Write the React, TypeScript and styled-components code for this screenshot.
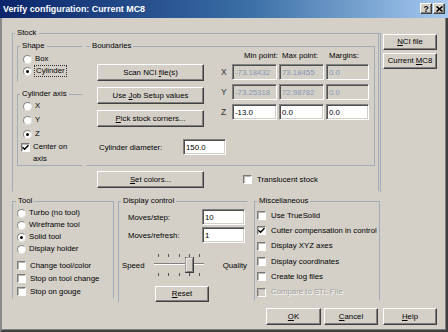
import React from "react";
import styled, { createGlobalStyle } from "styled-components";

const face = "#d4d0c8";
const line = "#a2abb8";
const textSize = "7.8px";

const GlobalStyle = createGlobalStyle`
  html, body {
    margin: 0;
    padding: 0;
    background: ${face};
  }
  body {
    font-family: "Liberation Sans", Arial, sans-serif;
    font-size: ${textSize};
    color: #000;
  }
`;

export default function App() {
  return (
    <>
      <GlobalStyle />
      <Window>
        <TitleBar>
          <TitleText>Verify configuration: Current MC8</TitleText>
          <CaptionButton>?</CaptionButton>
          <CaptionButton>
            <svg width="7" height="6" viewBox="0 0 7 6">
              <path d="M0.5 0.5 L6.5 5.5 M6.5 0.5 L0.5 5.5" stroke="#000" strokeWidth="1.6" />
            </svg>
          </CaptionButton>
        </TitleBar>
        <Body>
          <TopRow>
            <Group $w={369} $double $noBottom>
              <Legend>Stock</Legend>
              <StockBody>
                <StockRow>
                  <ShapeColumn>
                    <Group $w={66} $noRight $noBottom>
                      <Legend>Shape</Legend>
                      <ShapeBody>
                        <Option $h={12}>
                          <Radio />
                          Box
                        </Option>
                        <Option $h={12}>
                          <Radio $on />
                          <Focus>Cylinder</Focus>
                        </Option>
                      </ShapeBody>
                    </Group>
                    <AxisGroup $w={66} $noRight>
                      <Legend>Cylinder axis</Legend>
                      <AxisBody>
                        <Option $h={14}>
                          <Radio />X
                        </Option>
                        <Option $h={14}>
                          <Radio />Y
                        </Option>
                        <Option $h={14}>
                          <Radio $on />Z
                        </Option>
                        <WrapOption>
                          <Check $on />
                          <WrapText>Center on axis</WrapText>
                        </WrapOption>
                      </AxisBody>
                    </AxisGroup>
                  </ShapeColumn>
                  <Group $w={289} $noLeft>
                    <Legend $indent={3}>Boundaries</Legend>
                    <BoundsBody>
                      <BoundsTop>
                        <ButtonStack>
                          <PushButton $w={107}>
                            Scan NCI <u>f</u>ile(s)
                          </PushButton>
                          <PushButton $w={107}>
                            Use <u>J</u>ob Setup values
                          </PushButton>
                          <PushButton $w={107}>
                            <u>P</u>ick stock corners...
                          </PushButton>
                        </ButtonStack>
                        <CoordGrid>
                          <span />
                          <ColHead $pad={12}>Min point:</ColHead>
                          <ColHead $pad={3}>Max point:</ColHead>
                          <ColHead $pad={3}>Margins:</ColHead>
                          <AxisLabel>X</AxisLabel>
                          <Field $w={45} $off readOnly value="-73.18432" />
                          <Field $w={45} $off readOnly value="73.18455" />
                          <Field $w={43} $off readOnly value="0.0" />
                          <AxisLabel>Y</AxisLabel>
                          <Field $w={45} $off readOnly value="-73.25318" />
                          <Field $w={45} $off readOnly value="72.98782" />
                          <Field $w={43} $off readOnly value="0.0" />
                          <AxisLabel>Z</AxisLabel>
                          <Field $w={45} readOnly value="-13.0" />
                          <Field $w={45} readOnly value="0.0" />
                          <Field $w={43} readOnly value="0.0" />
                        </CoordGrid>
                      </BoundsTop>
                      <DiameterRow>
                        <DiameterLabel>Cylinder diameter:</DiameterLabel>
                        <Field $w={43} readOnly value="150.0" />
                      </DiameterRow>
                    </BoundsBody>
                  </Group>
                </StockRow>
                <StockFooter>
                  <PushButton $w={107}>
                    <u>S</u>et colors...
                  </PushButton>
                  <TranslucentOption $h={17} $gap={5}>
                    <Check />
                    Translucent stock
                  </TranslucentOption>
                </StockFooter>
              </StockBody>
            </Group>
            <SideButtons>
              <PushButton $w={54} $h={16}>
                <u>N</u>CI file
              </PushButton>
              <PushButton $w={54} $h={16}>
                Current <u>M</u>C8
              </PushButton>
            </SideButtons>
          </TopRow>

          <BottomRow>
            <Group $w={102} $noBottom>
              <Legend $indent={3}>Tool</Legend>
              <ToolBody>
                <Option $h={12}>
                  <Radio />
                  Turbo (no tool)
                </Option>
                <Option $h={12}>
                  <Radio />
                  Wireframe tool
                </Option>
                <Option $h={12}>
                  <Radio $on />
                  Solid tool
                </Option>
                <Option $h={12}>
                  <Radio />
                  Display holder
                </Option>
                <ToolChecks>
                  <Option $h={13} $gap={4}>
                    <Check />
                    Change tool/color
                  </Option>
                  <Option $h={13} $gap={4}>
                    <Check />
                    Stop on tool change
                  </Option>
                  <Option $h={13} $gap={4}>
                    <Check />
                    Stop on gouge
                  </Option>
                </ToolChecks>
              </ToolBody>
            </Group>

            <DisplayGroup $w={130} $noRight $noBottom>
              <Legend>Display control</Legend>
              <DisplayBody>
                <MoveRow>
                  <MoveLabel>Moves/step:</MoveLabel>
                  <Field $w={43} readOnly value="10" />
                </MoveRow>
                <MoveRow>
                  <MoveLabel>Moves/refresh:</MoveLabel>
                  <Field $w={43} readOnly value="1" />
                </MoveRow>
                <SpeedRow>
                  <SpeedLabel>Speed</SpeedLabel>
                  <SpeedSlider />
                  <QualityLabel>Quality</QualityLabel>
                </SpeedRow>
                <ResetButton $w={54} $h={16}>
                  <u>R</u>eset
                </ResetButton>
              </DisplayBody>
            </DisplayGroup>

            <MiscGroup $w={126} $noBottom>
              <Legend>Miscellaneous</Legend>
              <MiscBody>
                <Option $h={15.3} $gap={5}>
                  <Check />
                  Use TrueSolid
                </Option>
                <Option $h={15.3} $gap={5}>
                  <Check $on />
                  Cutter compensation in control
                </Option>
                <Option $h={15.3} $gap={5}>
                  <Check />
                  Display XYZ axes
                </Option>
                <Option $h={15.3} $gap={5}>
                  <Check />
                  Display coordinates
                </Option>
                <Option $h={15.3} $gap={5}>
                  <Check />
                  Create log files
                </Option>
                <Option $h={15.3} $gap={5} $off>
                  <Check $off />
                  Compare to STL File
                </Option>
              </MiscBody>
            </MiscGroup>
          </BottomRow>

          <Footer>
            <PushButton $w={55}>
              <u>O</u>K
            </PushButton>
            <PushButton $w={54}>
              <u>C</u>ancel
            </PushButton>
            <HelpButton $w={54}>
              <u>H</u>elp
            </HelpButton>
          </Footer>
        </Body>
      </Window>
    </>
  );
}

function Radio({ $on }: { $on?: boolean }) {
  return <RadioDot $on={$on} />;
}

function Check({ $on, $off }: { $on?: boolean; $off?: boolean }) {
  return (
    <CheckBox $off={$off}>
      {$on && (
        <svg width="7" height="7" viewBox="0 0 7 7">
          <path d="M0.5 3.2 L2.6 5.3 L6.5 1.2" fill="none" stroke="#000" strokeWidth="1.5" />
        </svg>
      )}
    </CheckBox>
  );
}

function SpeedSlider() {
  const ticks = [7.5, 17.5, 28.5, 38.5, 48.5];
  return (
    <SliderBox width="56" height="24" viewBox="0 0 56 24">
      {ticks.map((x) => (
        <g key={x}>
          <line x1={x} y1="1" x2={x} y2="4" stroke="#555" strokeWidth="1" />
          <line x1={x} y1="20" x2={x} y2="23" stroke="#555" strokeWidth="1" />
        </g>
      ))}
      <line x1="3" y1="10.5" x2="53" y2="10.5" stroke="#808080" strokeWidth="1" />
      <line x1="3" y1="11.5" x2="53" y2="11.5" stroke="#ffffff" strokeWidth="1" />
      <rect x="34.5" y="4.5" width="8" height="15" fill={face} stroke="#404040" strokeWidth="1" />
      <path d="M35 19 V5 H42" fill="none" stroke="#ffffff" strokeWidth="1" />
      <path d="M35.5 18.5 H41.5 V5.5" fill="none" stroke="#808080" strokeWidth="1" />
    </SliderBox>
  );
}

const Window = styled.div`
  box-sizing: border-box;
  width: 448px;
  height: 332px;
  display: flex;
  flex-direction: column;
  background: ${face};
  overflow: hidden;
`;

const TitleBar = styled.div`
  flex: none;
  height: 18px;
  display: flex;
  align-items: center;
  padding: 0 3px 1px 3px;
  box-sizing: border-box;
  background: linear-gradient(to right, #0a246a 0%, #3a6ea5 55%, #a6caf0 100%);
  color: #fff;
`;

const TitleText = styled.div`
  flex: 1;
  font-weight: bold;
  font-size: 8.9px;
  white-space: nowrap;
`;

const CaptionButton = styled.div`
  box-sizing: border-box;
  width: 12px;
  height: 11px;
  margin-left: 1px;
  display: flex;
  align-items: center;
  justify-content: center;
  background: ${face};
  color: #000;
  font-weight: bold;
  font-size: 8.5px;
  border: 1px solid;
  border-color: #fff #404040 #404040 #fff;
  box-shadow: inset -1px -1px #808080;
`;

const Body = styled.div`
  flex: 1;
  display: flex;
  flex-direction: column;
  padding: 10px 9px 0 10px;
  border-left: 2px solid #8a8a8a;
  border-right: 2px solid #404040;
  border-bottom: 2px solid #404040;
  box-shadow: inset 0 -1px #808080, inset -1px 0 #808080;
`;

const TopRow = styled.div`
  display: flex;
  align-items: flex-start;
`;

const BottomRow = styled.div`
  display: flex;
  align-items: flex-start;
  margin-top: 4px;
`;

const Group = styled.fieldset<{
  $w: number;
  $noLeft?: boolean;
  $noRight?: boolean;
  $noBottom?: boolean;
  $double?: boolean;
}>`
  box-sizing: border-box;
  flex: none;
  width: ${(p) => p.$w}px;
  min-width: 0;
  margin: 0;
  padding: 0;
  border: 1px solid ${line};
  ${(p) => p.$noLeft && "border-left-color: transparent;"}
  ${(p) => p.$noRight && "border-right-color: transparent;"}
  ${(p) => p.$noBottom && "border-bottom-color: transparent;"}
  ${(p) => p.$double && `border-right: 3px double ${line};`}
`;

const AxisGroup = styled(Group)`
  margin-top: 7px;
`;

const DisplayGroup = styled(Group)`
  margin-left: 4px;
`;

const MiscGroup = styled(Group)`
  margin-left: 6px;
`;

const Legend = styled.legend<{ $indent?: number }>`
  margin-left: ${(p) => p.$indent ?? 2}px;
  padding: 0 2px;
  font-size: ${textSize};
  line-height: 10px;
`;

const StockBody = styled.div`
  display: flex;
  flex-direction: column;
  padding: 3px 0 3px 4px;
`;

const StockRow = styled.div`
  display: flex;
  align-items: flex-start;
  gap: 3px;
`;

const ShapeColumn = styled.div`
  display: flex;
  flex-direction: column;
  width: 66px;
`;

const ShapeBody = styled.div`
  display: flex;
  flex-direction: column;
  padding: 2px 0 4px 5px;
`;

const AxisBody = styled.div`
  display: flex;
  flex-direction: column;
  padding: 0 0 0 5px;
`;

const Option = styled.label<{ $h: number; $gap?: number; $off?: boolean }>`
  display: flex;
  align-items: center;
  height: ${(p) => p.$h}px;
  gap: ${(p) => p.$gap ?? 3}px;
  white-space: nowrap;
  line-height: 10px;
  color: ${(p) => (p.$off ? "#a09e98" : "#000")};
  text-shadow: ${(p) => (p.$off ? "1px 1px #fff" : "none")};
`;

const TranslucentOption = styled(Option)`
  margin-left: 39px;
`;

const WrapOption = styled.label`
  display: flex;
  align-items: flex-start;
  gap: 3px;
  margin-left: -2px;
  line-height: 12px;
  & > span:first-child {
    margin-top: 2px;
  }
`;

const WrapText = styled.span`
  width: 40px;
`;

const Focus = styled.span`
  outline: 1px dotted #333;
  outline-offset: 0;
  padding: 0 1px;
`;

const RadioDot = styled.span<{ $on?: boolean }>`
  box-sizing: border-box;
  flex: none;
  width: 9px;
  height: 9px;
  border-radius: 50%;
  background: #fff;
  border: 1px solid;
  border-color: #8a8a8a #e4e2dc #e4e2dc #8a8a8a;
  display: flex;
  align-items: center;
  justify-content: center;
  &::after {
    content: "";
    width: 3px;
    height: 3px;
    border-radius: 50%;
    background: ${(p) => (p.$on ? "#000" : "transparent")};
  }
`;

const CheckBox = styled.span<{ $off?: boolean }>`
  box-sizing: border-box;
  flex: none;
  width: 9px;
  height: 9px;
  display: flex;
  align-items: center;
  justify-content: center;
  background: ${(p) => (p.$off ? face : "#fff")};
  border: 1px solid;
  border-color: #7a7a7a #fff #fff #7a7a7a;
  box-shadow: inset 1px 1px #b8b6b0;
`;

const BoundsBody = styled.div`
  display: flex;
  flex-direction: column;
  padding: 1px 0 10px 10px;
`;

const BoundsTop = styled.div`
  display: flex;
  align-items: flex-start;
`;

const ButtonStack = styled.div`
  display: flex;
  flex-direction: column;
  gap: 6px;
  margin-top: 12px;
`;

const PushButton = styled.button<{ $w: number; $h?: number }>`
  box-sizing: border-box;
  flex: none;
  width: ${(p) => p.$w}px;
  height: ${(p) => p.$h ?? 17}px;
  margin: 0;
  padding: 0;
  font-family: inherit;
  font-size: ${textSize};
  line-height: 10px;
  color: #000;
  background: ${face};
  border: 1px solid;
  border-color: #fff #404040 #404040 #fff;
  box-shadow: inset -1px -1px #808080;
  white-space: nowrap;
`;

const ResetButton = styled(PushButton)`
  margin: 9px 0 0 36px;
`;

const HelpButton = styled(PushButton)`
  margin-left: 2px;
`;

const CoordGrid = styled.div`
  display: grid;
  grid-template-columns: 10px 45px 45px 43px;
  grid-template-rows: 8px 16px 16px 16px;
  column-gap: 2px;
  row-gap: 4px;
  align-items: center;
  margin-left: 16px;
`;

const ColHead = styled.span<{ $pad: number }>`
  padding-left: ${(p) => p.$pad}px;
  white-space: nowrap;
  line-height: 8px;
`;

const AxisLabel = styled.span`
  color: #333;
  font-size: 8.5px;
  padding-left: 1px;
`;

const Field = styled.input<{ $w: number; $off?: boolean }>`
  box-sizing: border-box;
  width: ${(p) => p.$w}px;
  height: 16px;
  margin: 0;
  padding: 0 0 0 2px;
  font-family: inherit;
  font-size: ${textSize};
  color: ${(p) => (p.$off ? "#8898b4" : "#000")};
  background: ${(p) => (p.$off ? face : "#fff")};
  border: 1px solid;
  border-color: #808080 #fff #fff #808080;
  box-shadow: inset 1px 1px #505050, inset -1px -1px ${face};
  outline: none;
`;

const DiameterRow = styled.div`
  display: flex;
  align-items: center;
  margin-top: 12px;
`;

const DiameterLabel = styled.span`
  box-sizing: border-box;
  width: 86px;
  padding-left: 2px;
`;

const StockFooter = styled.div`
  display: flex;
  align-items: center;
  margin-top: 5px;
  padding-left: 80px;
`;

const SideButtons = styled.div`
  display: flex;
  flex-direction: column;
  gap: 3px;
  margin: 6px 0 0 2px;
`;

const ToolBody = styled.div`
  display: flex;
  flex-direction: column;
  padding: 1px 0 0 4px;
`;

const ToolChecks = styled.div`
  display: flex;
  flex-direction: column;
  margin-top: 4px;
`;

const DisplayBody = styled.div`
  display: flex;
  flex-direction: column;
  padding-top: 3px;
`;

const MoveRow = styled.div`
  display: flex;
  align-items: center;
  & + & {
    margin-top: 2px;
  }
`;

const MoveLabel = styled.span`
  box-sizing: border-box;
  width: 83px;
  padding-left: 9px;
`;

const SpeedRow = styled.div`
  display: flex;
  align-items: center;
  height: 24px;
  margin-top: 10px;
`;

const SpeedLabel = styled.span`
  box-sizing: border-box;
  width: 36px;
  padding-left: 3px;
`;

const SliderBox = styled.svg`
  display: block;
  flex: none;
`;

const QualityLabel = styled.span`
  margin-left: 16px;
`;

const MiscBody = styled.div`
  display: flex;
  flex-direction: column;
  padding: 2px 0 0 2px;
`;

const Footer = styled.div`
  display: flex;
  justify-content: flex-end;
  gap: 3px;
  margin-top: 5px;
`;
